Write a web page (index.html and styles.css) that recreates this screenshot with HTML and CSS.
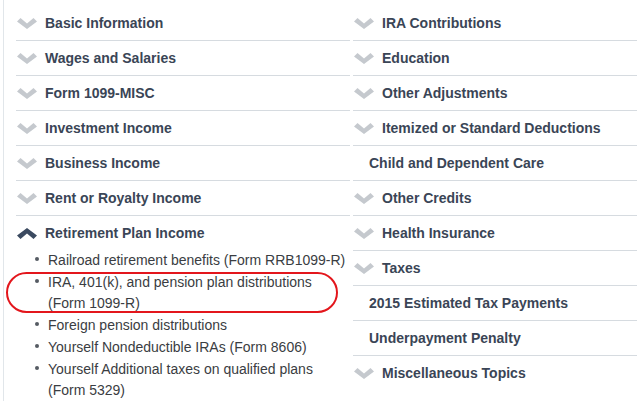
FILE: index.html
```html
<!DOCTYPE html>
<html>
<head>
<meta charset="utf-8">
<link rel="stylesheet" href="styles.css">
</head>
<body>
<div class="wrap">
  <div class="col col-left">
    <div class="row"><svg class="chev" viewBox="0 0 20 11"><polygon points="0,3.5 3.5,0 10,5.5 16.5,0 20,3.5 10,11"/></svg><span class="label">Basic Information</span></div>
    <div class="row"><svg class="chev" viewBox="0 0 20 11"><polygon points="0,3.5 3.5,0 10,5.5 16.5,0 20,3.5 10,11"/></svg><span class="label">Wages and Salaries</span></div>
    <div class="row"><svg class="chev" viewBox="0 0 20 11"><polygon points="0,3.5 3.5,0 10,5.5 16.5,0 20,3.5 10,11"/></svg><span class="label">Form 1099-MISC</span></div>
    <div class="row"><svg class="chev" viewBox="0 0 20 11"><polygon points="0,3.5 3.5,0 10,5.5 16.5,0 20,3.5 10,11"/></svg><span class="label">Investment Income</span></div>
    <div class="row"><svg class="chev" viewBox="0 0 20 11"><polygon points="0,3.5 3.5,0 10,5.5 16.5,0 20,3.5 10,11"/></svg><span class="label">Business Income</span></div>
    <div class="row"><svg class="chev" viewBox="0 0 20 11"><polygon points="0,3.5 3.5,0 10,5.5 16.5,0 20,3.5 10,11"/></svg><span class="label">Rent or Royalty Income</span></div>
    <div class="row open"><svg class="chev up" viewBox="0 0 20 11"><polygon points="0,7.5 3.5,11 10,5.5 16.5,11 20,7.5 10,0"/></svg><span class="label">Retirement Plan Income</span></div>
    <ul class="sub">
      <li>Railroad retirement benefits (Form RRB1099-R)</li>
      <li class="circled">IRA, 401(k), and pension plan distributions (Form 1099-R)<span class="ring"></span></li>
      <li>Foreign pension distributions</li>
      <li>Yourself Nondeductible IRAs (Form 8606)</li>
      <li>Yourself Additional taxes on qualified plans (Form 5329)</li>
    </ul>
  </div>
  <div class="col col-right">
    <div class="row"><svg class="chev" viewBox="0 0 20 11"><polygon points="0,3.5 3.5,0 10,5.5 16.5,0 20,3.5 10,11"/></svg><span class="label">IRA Contributions</span></div>
    <div class="row"><svg class="chev" viewBox="0 0 20 11"><polygon points="0,3.5 3.5,0 10,5.5 16.5,0 20,3.5 10,11"/></svg><span class="label">Education</span></div>
    <div class="row"><svg class="chev" viewBox="0 0 20 11"><polygon points="0,3.5 3.5,0 10,5.5 16.5,0 20,3.5 10,11"/></svg><span class="label">Other Adjustments</span></div>
    <div class="row"><svg class="chev" viewBox="0 0 20 11"><polygon points="0,3.5 3.5,0 10,5.5 16.5,0 20,3.5 10,11"/></svg><span class="label">Itemized or Standard Deductions</span></div>
    <div class="row plain"><span class="label">Child and Dependent Care</span></div>
    <div class="row"><svg class="chev" viewBox="0 0 20 11"><polygon points="0,3.5 3.5,0 10,5.5 16.5,0 20,3.5 10,11"/></svg><span class="label">Other Credits</span></div>
    <div class="row"><svg class="chev" viewBox="0 0 20 11"><polygon points="0,3.5 3.5,0 10,5.5 16.5,0 20,3.5 10,11"/></svg><span class="label">Health Insurance</span></div>
    <div class="row"><svg class="chev" viewBox="0 0 20 11"><polygon points="0,3.5 3.5,0 10,5.5 16.5,0 20,3.5 10,11"/></svg><span class="label">Taxes</span></div>
    <div class="row plain"><span class="label">2015 Estimated Tax Payments</span></div>
    <div class="row plain"><span class="label">Underpayment Penalty</span></div>
    <div class="row last"><svg class="chev" viewBox="0 0 20 11"><polygon points="0,3.5 3.5,0 10,5.5 16.5,0 20,3.5 10,11"/></svg><span class="label">Miscellaneous Topics</span></div>
  </div>
</div>
</body>
</html>
```
FILE: styles.css
```css
html, body {
  margin: 0;
  padding: 0;
  background: #ffffff;
  overflow: hidden;
}
body {
  font-family: "Liberation Sans", Arial, Helvetica, sans-serif;
  font-size: 14px;
  width: 637px;
  height: 401px;
}
.wrap {
  display: flex;
  margin-left: 3px;
  border-left: 1px solid #e1e6ea;
  padding-left: 12px;
  padding-top: 6px;
  height: 395px;
  gap: 3px;
}
.col-left {
  width: 334px;
}
.col-right {
  width: 284px;
}
.row {
  height: 34px;
  border-bottom: 1px solid #d6dbe0;
  display: flex;
  align-items: center;
  color: #3a4556;
  font-weight: bold;
}
.row.open, .row.last {
  border-bottom: none;
}
.chev {
  width: 20px;
  height: 11px;
  margin-left: 1px;
  margin-right: 8px;
  flex: none;
}
.chev polygon {
  fill: #c5c9ce;
}
.chev.up polygon {
  fill: #3b4a60;
}
.row.plain .label {
  margin-left: 16px;
}
.sub {
  list-style: none;
  margin: 0 0 0 19px;
  padding: 0;
  color: #3a3d42;
  line-height: 21px;
}
.sub li {
  padding-left: 13px;
  text-indent: -13px;
  margin-bottom: 1px;
}
.sub li::before {
  content: "";
  display: inline-block;
  width: 4px;
  height: 4px;
  border-radius: 50%;
  background: #555b63;
  margin-right: 9px;
  vertical-align: 4px;
}
.circled {
  position: relative;
}
.ring {
  position: absolute;
  left: -29px;
  top: 0;
  width: 328px;
  height: 37px;
  border: 2px solid #e3161c;
  border-radius: 21px;
}
```
